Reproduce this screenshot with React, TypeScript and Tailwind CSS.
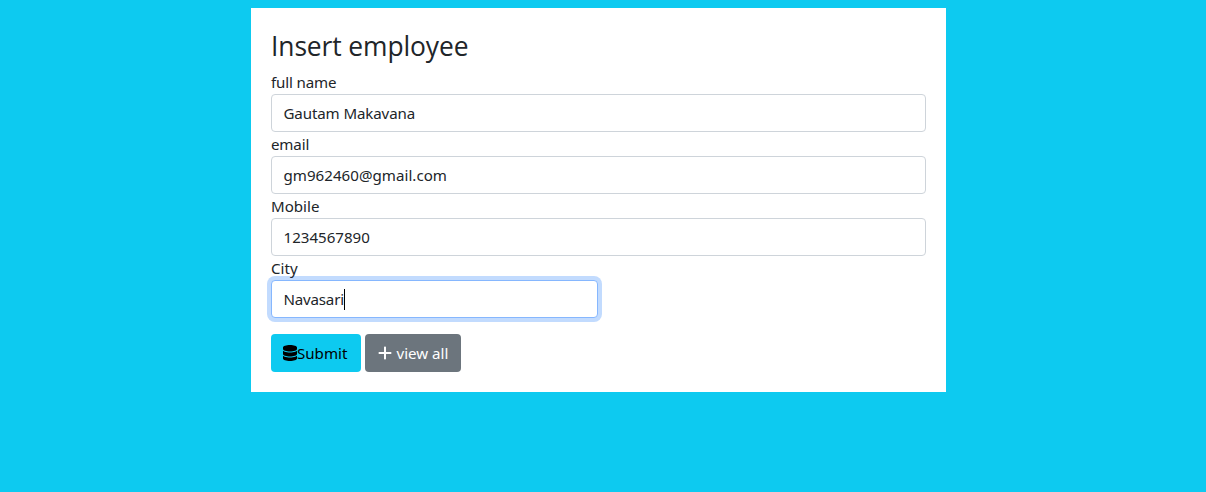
import type { ReactNode } from "react";
import { FaDatabase, FaPlus } from "react-icons/fa6";

type FieldProps = {
  label: string;
  value: string;
  valueClass?: string;
  labelClass?: string;
  focused?: boolean;
};

function Field({ label, value, valueClass = "", labelClass = "", focused = false }: FieldProps) {
  return (
    <div>
      <div className="h-6 leading-6">
        <span className={labelClass}>{label}</span>
      </div>
      <div
        role="textbox"
        aria-label={label}
        className={`flex h-[38px] items-center rounded border bg-white pr-3 pl-[11.5px] leading-6 ${
          focused
            ? "w-[327px] border-[#86b7fe] shadow-[0_0_0_4px_#c2dbfe]"
            : "w-full border-[#ced4da]"
        }`}
      >
        <span className={valueClass}>{value}</span>
        {focused && <span className="h-[21px] w-px bg-black" />}
      </div>
    </div>
  );
}

function Button({ className, children }: { className: string; children: ReactNode }) {
  return (
    <button type="button" className={`flex h-[38px] items-center rounded leading-6 ${className}`}>
      {children}
    </button>
  );
}

export default function App() {
  return (
    <div className="min-h-screen bg-[#0dcaf0] pt-2 pl-[251px] font-['Noto_Sans','Open_Sans',sans-serif] text-[15.1px] text-[#212529]">
      <main className="h-[384px] w-[695px] bg-white p-5">
        <h1 className="mb-1.5 h-9 font-['Open_Sans','Noto_Sans',sans-serif] text-[26.4px] leading-9 tracking-[-0.09px]">
          Insert employee
        </h1>
        <Field label="full name" labelClass="tracking-[-0.14px]" value="Gautam Makavana" valueClass="tracking-[-0.12px]" />
        <Field label="email" labelClass="tracking-[-0.15px]" value="gm962460@gmail.com" valueClass="tracking-[0.03px]" />
        <Field label="Mobile" value="1234567890" />
        <Field label="City" value="Navasari" valueClass="tracking-[-0.19px]" focused />
        <div className="mt-4 flex gap-1">
          <Button className="w-[90px] bg-[#0dcaf0] pl-3 text-black">
            <FaDatabase className="h-4 w-[14px] shrink-0" />
            <span>Submit</span>
          </Button>
          <Button className="w-24 gap-[4.5px] bg-[#6c757d] pl-[13px] text-white">
            <FaPlus className="h-4 w-[14px] shrink-0" />
            <span className="whitespace-nowrap">view all</span>
          </Button>
        </div>
      </main>
    </div>
  );
}
